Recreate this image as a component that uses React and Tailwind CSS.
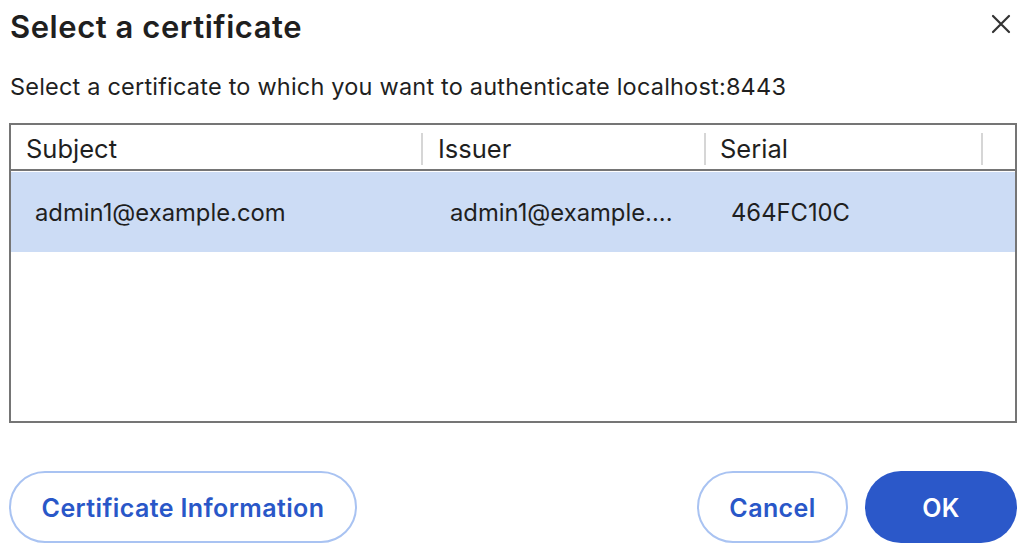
export default function App() {
  return (
    <div className="w-[1025px] h-[556px] bg-white text-[#1f1f1f] overflow-hidden" style={{ fontFamily: 'Inter, "Liberation Sans", sans-serif' }}>
      <div className="flex items-start justify-between pl-[10px] pr-[14px] pt-[8px]">
        <h1 className="text-[31px] leading-[38px] font-semibold tracking-[0.55px]">Select a certificate</h1>
        <svg width="20" height="20" viewBox="0 0 20 20" className="mt-[6px]">
          <path d="M2 2 L18 18 M18 2 L2 18" stroke="#333" strokeWidth="2.2" strokeLinecap="round" />
        </svg>
      </div>
      <p className="pl-[10px] mt-[26px] text-[23.5px] leading-[30px] tracking-[0.2px]">Select a certificate to which you want to authenticate localhost:8443</p>
      <div className="mx-[9px] mt-[21px] h-[300px] w-[1008px] border-2 border-[#757575] flex flex-col">
        <div className="flex h-[46px] pt-[4px] border-b-2 border-[#757575] items-center text-[25.5px]">
          <div className="w-[412px] h-[32px] border-r-2 border-[#d6d6d6] pl-[15px] flex items-center">Subject</div>
          <div className="w-[283px] h-[32px] border-r-2 border-[#d6d6d6] pl-[15px] flex items-center">Issuer</div>
          <div className="w-[277px] h-[32px] border-r-2 border-[#d6d6d6] pl-[14px] flex items-center">Serial</div>
        </div>
        <div className="flex h-[80px] mt-[1px] pt-[2px] bg-[#ccdcf5] items-center text-[23.8px]">
          <div className="w-[413px] pl-[24px]">admin1@example.com</div>
          <div className="w-[283px] pl-[26px]">admin1@example....</div>
          <div className="pl-[24px]">464FC10C</div>
        </div>
      </div>
      <div className="flex items-center justify-between pl-[9px] pr-[8px] mt-[48px]">
        <button className="h-[72px] w-[348px] pt-[4px] rounded-full border-2 border-[#a9c3f2] text-[#2957c8] text-[25px] font-semibold tracking-[0.4px]">Certificate Information</button>
        <div className="flex gap-[17px]">
          <button className="h-[72px] w-[151px] pt-[4px] rounded-full border-2 border-[#a9c3f2] text-[#2957c8] text-[25px] font-semibold tracking-[0.4px]">Cancel</button>
          <button className="h-[72px] w-[152px] pt-[4px] rounded-full bg-[#2b58c9] text-white text-[25px] font-semibold tracking-[0.4px]">OK</button>
        </div>
      </div>
    </div>
  );
}
